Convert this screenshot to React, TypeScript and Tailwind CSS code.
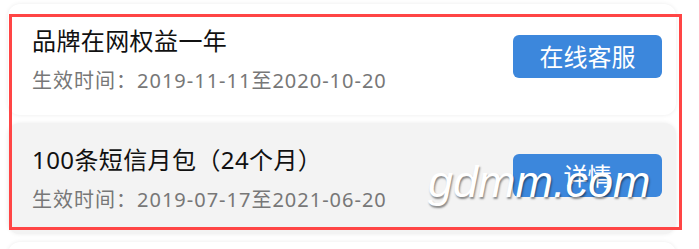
const items = [
  {
    title: "品牌在网权益一年",
    period: "2019-11-11至2020-10-20",
    action: "在线客服",
    bg: "bg-white",
  },
  {
    title: "100条短信月包（24个月）",
    period: "2019-07-17至2021-06-20",
    action: "详情",
    bg: "bg-[#f3f3f3]",
  },
  {
    title: "",
    period: "",
    action: "",
    bg: "bg-white",
  },
];

const font = {
  fontFamily: '"Noto Sans", "Noto Sans CJK SC", sans-serif',
};

export default function App() {
  return (
    <div className="relative h-[249px] w-[699px] overflow-hidden bg-white" style={font}>
      <div className="flex flex-col gap-2 pl-2 pr-[23px] pt-1">
        {items.map((item, i) => (
          <div
            key={i}
            className={`flex h-[111px] shrink-0 items-start justify-between rounded-xl ${item.bg} pl-6 pr-[14px] shadow-[0_0_4px_rgba(0,0,0,0.08)]`}
          >
            {item.title && (
              <>
                <div className="pt-[21px]">
                  <div className="text-[24px] leading-[32px] tracking-[0.4px] text-[#111]">{item.title}</div>
                  <div className="mt-[10px] text-[20px] leading-[28px] tracking-[1px] text-[#777]">
                    生效时间：{item.period}
                  </div>
                </div>
                <button className="mt-[31px] flex h-[43px] w-[149px] items-center justify-center rounded-[6px] bg-[#3c87dc] text-[24px] text-white">
                  {item.action}
                </button>
              </>
            )}
          </div>
        ))}
      </div>

      {/* red highlight frame */}
      <div className="pointer-events-none absolute left-[9px] top-[14px] h-[216px] w-[673px] border-[3px] border-[#ff4545]" />

      {/* watermark */}
      <div
        className="pointer-events-none absolute left-[428px] top-[160px] text-[45px] italic leading-[44px] text-white [text-shadow:1px_2px_2px_rgba(0,0,0,0.45)]"
        style={{ fontFamily: '"Liberation Sans", sans-serif' }}
      >
        gdmm.com
      </div>
    </div>
  );
}
